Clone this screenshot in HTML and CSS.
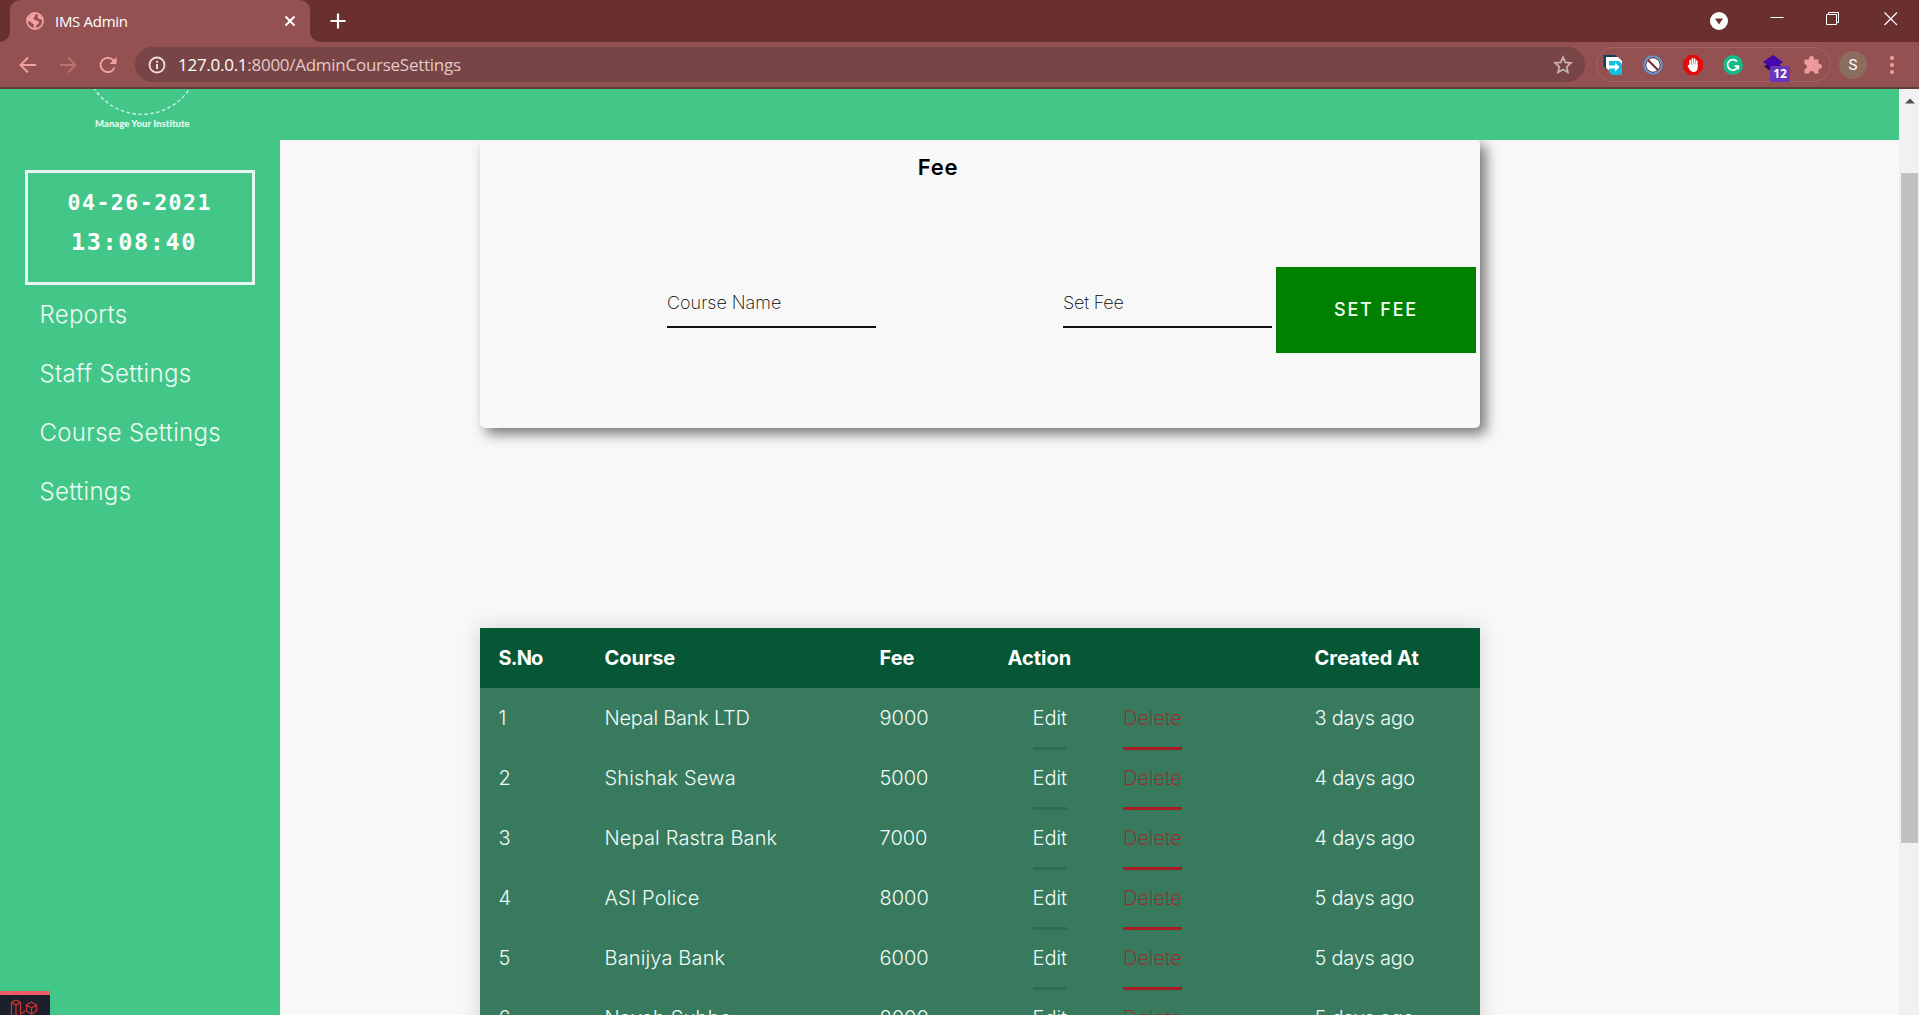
FILE: index.html
```html
<!DOCTYPE html>
<html lang="en">
<head>
<meta charset="utf-8">
<title>IMS Admin</title>
<link rel="stylesheet" href="styles.css">
</head>
<body>
<div class="titlebar">
  <div class="tab">
    <svg class="globe" width="18" height="18" viewBox="0 0 18 18"><circle cx="9" cy="9" r="8" fill="#945151" stroke="#f3a0a0" stroke-width="1.800"/><path d="M2 6.500C3.500 3.500 6 1.800 9.500 2L9 4.500 7.500 5.500 8 7.500 10 8.500 12.500 9 13 11 10.500 13.500 9.500 16 7.500 15.500 8 12.500 5.500 11 4.500 9.500 1.500 9zM12 2.500 11.500 5 13 7 16.500 7.500 15 4.500z" fill="#f3a0a0"/></svg>
    <span class="tab-title">IMS Admin</span>
    <svg class="tab-close" width="12" height="12" viewBox="0 0 12 12"><path d="M1.500 1.500l9 9M10.500 1.500l-9 9" stroke="#fff" stroke-width="2"/></svg>
  </div>
  <svg class="new-tab" width="16" height="16" viewBox="0 0 16 16"><path d="M8 .5v15M.5 8h15" stroke="#fff" stroke-width="2.200"/></svg>
  <div class="window-controls">
    <svg width="18" height="18" viewBox="0 0 18 18"><circle cx="9" cy="9" r="9" fill="#fff"/><path d="M5 6.500h8L9 12.500z" fill="#6a2f2f"/></svg>
    <svg class="win" width="14" height="14" viewBox="0 0 14 14"><path d="M.5 5.500h13" stroke="#fff"/></svg>
    <svg class="win" width="14" height="14" viewBox="0 0 14 14"><path d="M.5 2.500h10v10H.5zM2.500 2.500V.5h10v10h-2" fill="none" stroke="#fff"/></svg>
    <svg class="win" width="14" height="14" viewBox="0 0 14 14"><path d="M.5.5l12.500 12.500M13 .5L.5 13" stroke="#fff" stroke-width="1.200"/></svg>
  </div>
</div>
<div class="toolbar">
  <svg width="20" height="20" viewBox="0 0 20 20"><path d="M18 10H3M10 2.500 2.500 10l7.500 7.500" fill="none" stroke="#f3a0a0" stroke-width="1.900"/></svg>
  <svg width="20" height="20" viewBox="0 0 20 20"><path d="M2 10h15M10 2.500l7.500 7.500-7.500 7.500" fill="none" stroke="#bd7272" stroke-width="1.900"/></svg>
  <svg width="20" height="20" viewBox="0 0 20 20"><path d="M16.500 12.500A7.200 7.200 0 1 1 15.500 5.500" fill="none" stroke="#f3a0a0" stroke-width="2"/><path d="M18.500 2v7h-7z" fill="#f3a0a0"/></svg>
  <div class="address">
    <svg width="18" height="18" viewBox="0 0 18 18"><circle cx="9" cy="9" r="7.500" fill="none" stroke="#f3dede" stroke-width="1.800"/><path d="M9 8v5M9 4.800v2" stroke="#f3dede" stroke-width="1.900"/></svg>
    <span class="url"><b>127.0.0.1</b>:8000/AdminCourseSettings</span>
    <svg class="star" width="20" height="20" viewBox="0 0 20 20"><path d="M10 2.200l2.300 5.200 5.600.6-4.200 3.800 1.200 5.600L10 14.500l-4.900 2.900 1.200-5.600L2.100 8l5.600-.6z" fill="none" stroke="#ccb4b4" stroke-width="1.700"/></svg>
  </div>
  <div class="extensions">
    <svg width="20" height="22" viewBox="0 0 20 22"><path d="M.5 1h12l2 3H4v12L.5 12z" fill="#123d58"/><path d="M3 3h12l4 4v11H8l-5-4z" fill="#fff"/><path d="M6 7h10l3 3v11H9l-3-3z" fill="#0fc0de"/><path d="M5 11.500h7V8.500l4.500 4.500-4.500 4.500v-3H5z" fill="#fff"/></svg>
    <svg width="20" height="20" viewBox="0 0 20 20"><circle cx="10" cy="10" r="9" fill="#fff" stroke="#4d8fd6" stroke-width="1.600"/><circle cx="10" cy="10" r="7.300" fill="none" stroke="#573038" stroke-width="1.200"/><path d="M5 5l10 10" stroke="#7a3038" stroke-width="2.200"/></svg>
    <svg width="20" height="20" viewBox="0 0 20 20"><path d="M6 0h8l6 6v8l-6 6H6l-6-6V6z" fill="#e20c0c"/><path d="M7.200 11V5.500M9.400 10V3.800M11.600 10V4.200M13.700 11V6" stroke="#fff" stroke-width="1.700" stroke-linecap="round"/><path d="M6.400 9.500h8.200v3.500c0 2.500-1.600 4-4 4-2.300 0-3.500-1.500-4.400-3l-1.700-3.200 1-.8z" fill="#fff"/></svg>
    <svg width="20" height="20" viewBox="0 0 20 20"><circle cx="10" cy="10" r="10" fill="#16b987"/><path d="M14 6.500A5.300 5.300 0 1 0 15 11.200h-3.500M15.200 10.500v4" fill="none" stroke="#fff" stroke-width="1.800"/></svg>
    <div class="badged">
      <svg width="20" height="20" viewBox="0 0 20 20"><path d="M10 5.500l9 6-9 6-9-6z" fill="#27066d"/><path d="M10 0l10 7-10 7L0 7z" fill="#4307ac"/></svg>
      <span class="badge">12</span>
    </div>
    <svg width="20" height="20" viewBox="0 0 20 20"><path d="M1.500 4.500H6V3.500a2.500 2.500 0 0 1 5 0v1h4.500V9h1a2.500 2.500 0 0 1 0 5h-1v4.500h-4.300a2.600 2.600 0 0 0-5.200 0H1.500V14a2.500 2.500 0 0 0 0-5z" fill="#ee9b9b"/></svg>
  </div>
  <span class="avatar">S</span>
  <svg class="menu" width="20" height="20" viewBox="0 0 20 20"><g fill="#f3a0a0"><circle cx="10" cy="3" r="2"/><circle cx="10" cy="10" r="2"/><circle cx="10" cy="17" r="2"/></g></svg>
</div>
<div class="page">
  <aside class="sidebar">
    <div class="logo">
      <svg width="100" height="27" viewBox="0 0 100 27"><circle cx="50" cy="-32" r="57.300" fill="none" stroke="#d4f5e5" stroke-width="1.300" stroke-dasharray="3.500 2.500"/></svg>
      <span>Manage Your Institute</span>
    </div>
    <div class="clock"><div class="date">04-26-2021</div><div class="time">13:08:40</div></div>
    <nav class="nav"><a>Reports</a><a>Staff Settings</a><a>Course Settings</a><a>Settings</a></nav>
    <div class="debugbar">
      <svg width="30" height="20" viewBox="0 0 30 20"><g fill="none" stroke="#c8362f" stroke-width="1.200"><path d="M1.500 3.500 6 1l4.500 2.500L6 6zM1.500 3.500V20M6 6v14M10.500 3.500V15l5-3M16.500 6 21.500 3l5 3-5 3zM16.500 6v6l5 3 5-3V6M21.500 9v6"/></g></svg>
    </div>
  </aside>
  <div class="main">
    <header class="topbar"></header>
    <section class="content">
      <div class="card">
        <h2>Fee</h2>
        <form class="fee-form">
          <div class="field">Course Name</div>
          <div class="field second">Set Fee</div>
          <button type="button">SET FEE</button>
        </form>
      </div>
      <table class="courses">
        <colgroup><col class="c1"><col class="c2"><col class="c3"><col class="c4"><col class="c5"></colgroup>
        <thead><tr><th class="sno">S.No</th><th>Course</th><th>Fee</th><th>Action</th><th>Created At</th></tr></thead>
        <tbody>
          <tr><td>1</td><td class="tight">Nepal Bank LTD</td><td>9000</td><td><a class="edit">Edit</a><a class="delete">Delete</a></td><td class="when">3 days ago</td></tr>
          <tr><td>2</td><td>Shishak Sewa</td><td>5000</td><td><a class="edit">Edit</a><a class="delete">Delete</a></td><td class="when">4 days ago</td></tr>
          <tr><td>3</td><td>Nepal Rastra Bank</td><td>7000</td><td><a class="edit">Edit</a><a class="delete">Delete</a></td><td class="when">4 days ago</td></tr>
          <tr><td>4</td><td>ASI Police</td><td>8000</td><td><a class="edit">Edit</a><a class="delete">Delete</a></td><td class="when">5 days ago</td></tr>
          <tr><td>5</td><td>Banijya Bank</td><td>6000</td><td><a class="edit">Edit</a><a class="delete">Delete</a></td><td class="when">5 days ago</td></tr>
          <tr><td>6</td><td>Nayab Subba</td><td>8000</td><td><a class="edit">Edit</a><a class="delete">Delete</a></td><td class="when">5 days ago</td></tr>
        </tbody>
      </table>
    </section>
  </div>
  <div class="scrollbar">
    <svg width="10" height="6" viewBox="0 0 10 6"><path d="M0 5.500 5 .5l5 5z" fill="#505050"/></svg>
    <div class="thumb"></div>
  </div>
</div>
</body>
</html>
```
FILE: styles.css
```css
* { box-sizing: border-box; }
html, body { margin: 0; height: 100%; overflow: hidden; }
body { font-family: Inter, "Liberation Sans", sans-serif; background: #f8f8f8; display: flex; flex-direction: column; }
svg { display: block; flex: none; }

/* Browser frame */
.titlebar { flex: none; height: 42px; background: #6a2f2f; display: flex; padding-left: 10px; }
.tab { position: relative; width: 300px; background: #945151; border-radius: 10px 10px 0 0; display: flex; align-items: center; padding: 0 14px 0 16px; font: 15px "Open Sans", sans-serif; color: #fff; }
.tab::before, .tab::after { content: ""; position: absolute; bottom: 0; width: 10px; height: 10px; }
.tab::before { left: -10px; background: radial-gradient(circle at 0 0, transparent 9.5px, #945151 10px); }
.tab::after { right: -10px; background: radial-gradient(circle at 100% 0, transparent 9.5px, #945151 10px); }
.tab-title { margin-left: 11px; letter-spacing: -0.3px; flex: 1; }
.new-tab { margin: 13px 0 0 20px; }
.window-controls { margin-left: auto; display: flex; padding: 12px 21px 0 0; }
.window-controls .win { margin-left: 42px; }
.window-controls .win:nth-child(4) { margin-left: 44px; }

.toolbar { flex: none; height: 47px; background: #945151; border-bottom: 2px solid #5b4039; display: flex; align-items: center; padding-left: 17.500px; }
.toolbar > svg + svg { margin-left: 20px; }
.address { margin-left: 17.500px; width: 1450px; height: 35px; border-radius: 18px; background: #774545; display: flex; align-items: center; padding: 0 12.500px 0 13px; }
.url { flex: 1; margin-left: 12px; font: 17px "Open Sans", sans-serif; letter-spacing: -0.27px; color: #e5c9c9; }
.url b { font-weight: 400; color: #fff; }
.extensions { margin-left: 11px; width: 235px; height: 35px; border: 1px solid #a66363; border-radius: 18px; display: flex; align-items: center; gap: 20px; padding-left: 6px; }
.badged { position: relative; }
.badge { position: absolute; left: 7px; top: 11px; width: 20px; height: 16px; border-radius: 2px; background: #6a35b8; color: #fff; font: 700 12px/16px "Open Sans", sans-serif; text-align: center; }
.avatar { margin-left: 8px; width: 28px; height: 28px; border-radius: 50%; background: #8a6d5e; color: #fff; font: 15px/28px Roboto, sans-serif; text-align: center; }
.menu { margin-left: 15px; }

/* Page */
.page { flex: 1; min-height: 0; display: flex; overflow: hidden; }
.sidebar { width: 280px; background: #43c788; display: flex; flex-direction: column; color: #fff; }
.logo { flex: none; height: 81px; padding-left: 92px; font: 900 9.500px/14px Lato, sans-serif; color: #e6faf0; }
.logo span { display: block; margin: 2px 0 0 3px; white-space: nowrap; letter-spacing: 0.050px; }
.logo svg { margin-bottom: -1px; }
.clock { flex: none; width: 230px; height: 115px; margin-left: 25px; padding: 10px 0 0 39.500px; border: 3px solid #e6f8ef; font: 700 21.500px/40px "DejaVu Sans Mono", monospace; letter-spacing: 1.500px; }
.time { margin: -1px 0 0 3.500px; font-size: 23.500px; letter-spacing: 1.600px; }
.nav { display: flex; flex-direction: column; padding-left: 39.500px; }
.nav a { font-size: 24px; font-weight: 300; line-height: 59px; letter-spacing: 0.300px; color: #ecfbf4; }
.debugbar { margin-top: auto; width: 50px; height: 24px; border-top: 4px solid #ee5a66; background: #1d1f2c; padding: 4px 0 0 10px; overflow: hidden; }

.main { flex: 1; display: flex; flex-direction: column; min-width: 0; }
.topbar { flex: none; height: 51px; background: #43c788; }
.content { flex: 1; min-height: 0; overflow: hidden; padding-left: 200px; background: #f8f8f8; }
.card { width: 1000px; height: 289px; margin-top: -1px; border-radius: 5px; background: #f8f8f8; box-shadow: 6px 6px 13px rgba(0, 0, 0, 0.52); padding-top: 11px; }
.card h2 { margin: 0; width: 916px; text-align: center; font-size: 22px; font-weight: 600; line-height: 35px; letter-spacing: 0.700px; color: #000; }
.fee-form { display: flex; margin-top: 82px; padding-left: 187px; }
.field { width: 209px; height: 61px; border-bottom: 2px solid #111; padding-top: 22px; font-size: 18px; font-weight: 200; line-height: 27px; color: #000; }
.field.second { margin-left: 187px; letter-spacing: -0.200px; }
.fee-form button { width: 200px; height: 86px; margin-left: 4px; padding: 0 0 1px; border: 0; background: #008000; color: #f4fff4; font: 500 18px Inter, sans-serif; letter-spacing: 1.800px; }

.courses { width: 1000px; margin-top: 200px; table-layout: fixed; border-collapse: collapse; font-size: 20px; line-height: 60px; text-align: left; color: #fff; box-shadow: 0 0 20px rgba(0, 0, 0, 0.15); }
.courses th, .courses td { height: 60px; padding: 0 0 0 18.500px; white-space: nowrap; }
.courses thead { background: #065735; }
.courses .sno { letter-spacing: -0.800px; }
.courses tbody { background: #387a5e; font-weight: 300; color: #f1fbf6; }
.courses tbody td:nth-child(2) { letter-spacing: 0.150px; }
.courses tbody td.tight { letter-spacing: -0.250px; }
.c1 { width: 106px; }
.c2 { width: 275px; }
.c3 { width: 128px; }
.c4 { width: 307px; }
.c5 { width: 184px; }
.when { letter-spacing: -0.250px; }
.edit, .delete { padding-bottom: 17px; border-bottom: 3px solid #2c6b58; }
.edit { margin-left: 25px; }
.delete { margin-left: 56px; color: #b5161f; font-weight: 200; border-color: #a81c24; }

.scrollbar { flex: none; width: 20px; background: #f1f1f1; padding: 9px 1px 0 2px; }
.scrollbar svg { margin-left: 4px; }
.thumb { height: 670px; margin-top: 69px; background: #c1c1c1; }
```
